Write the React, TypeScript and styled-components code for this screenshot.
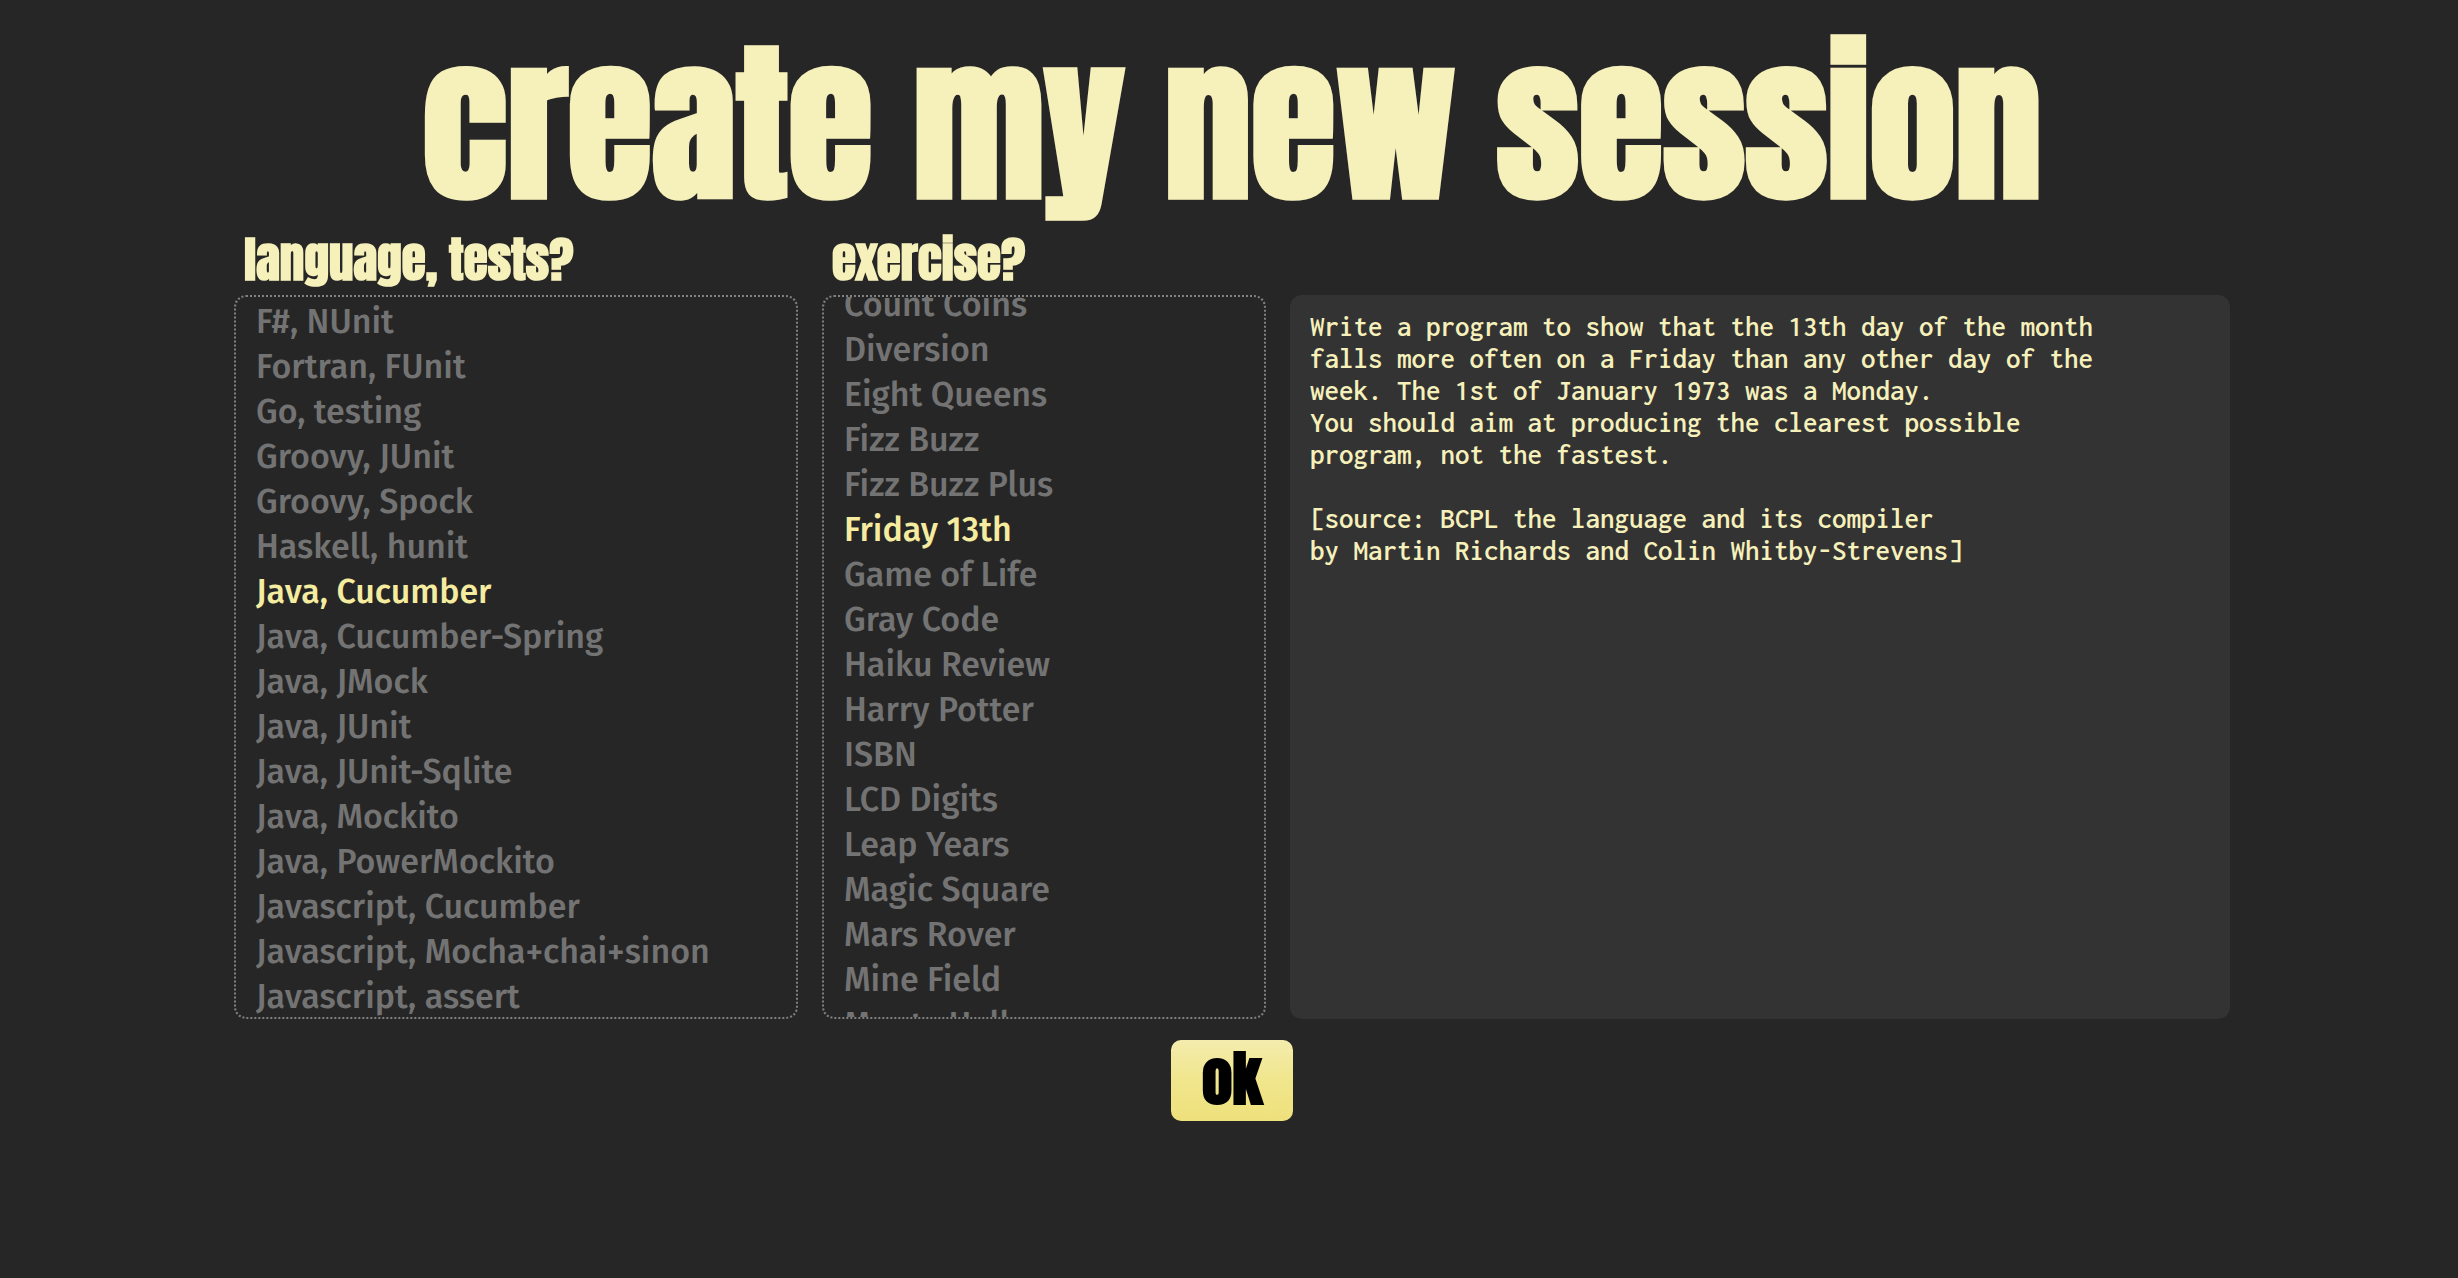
import React, { useLayoutEffect, useRef, useState } from 'react';
import styled, { createGlobalStyle } from 'styled-components';

const display = "Impact, Anton, 'Roboto Condensed', sans-serif";
const body = "'Trebuchet MS', 'Fira Sans', 'Open Sans', sans-serif";
const mono = "Consolas, Inconsolata, 'Noto Sans Mono', 'DejaVu Sans Mono', monospace";

const cream = '#f6f0bb';

const GlobalStyle = createGlobalStyle`
  *, *::before, *::after { box-sizing: border-box; }
  body { margin: 0; background: #262626; }
`;

const Page = styled.main`
  padding: 28px 228px 32px 234px;
  font-family: ${body};
  color: ${cream};
`;

const Title = styled.h1`
  margin: 0 0 4px;
  font: 700 173px/192px ${display};
  text-align: center;
  white-space: nowrap;
`;

const Form = styled.form`
  display: grid;
  grid-template-columns: 564fr 444fr 940fr;
  gap: 21px 24px;
`;

const Group = styled.fieldset`
  display: flex;
  flex-direction: column;
  min-width: 0;
  margin: 0;
  padding: 0;
  border: 0;
`;

const Heading = styled.legend`
  padding: 0 10px;
  font: 700 49px/71px ${display};
`;

const List = styled.div<{ $top: number }>`
  height: 724px;
  padding-top: ${(p) => p.$top}px;
  border: 2px dotted #808080;
  border-radius: 12px;
  overflow-y: auto;
  scrollbar-width: none;
`;

const Choice = styled.label`
  display: block;
  padding: 0 20px;
  font-size: 34px;
  font-weight: 500;
  line-height: 45px;
  white-space: nowrap;
  color: #737373;
  cursor: pointer;

  &:has(input:checked) { color: #f5eca0; }
  &:has(input:focus-visible) { text-decoration: underline; }
`;

const Radio = styled.input`
  appearance: none;
  width: 0;
  height: 0;
  margin: 0;
  outline: 0;
`;

const Instructions = styled.pre`
  align-self: end;
  height: 724px;
  margin: 0;
  padding: 16px 20px;
  border-radius: 12px;
  background: #333333;
  font: 600 29px/32px ${mono};
  white-space: pre-wrap;
  overflow: auto;
`;

const Actions = styled.div`
  grid-column: 1 / -1;
  display: flex;
  justify-content: center;
`;

const OkButton = styled.button`
  padding: 0 31px 5px;
  border: 0;
  border-radius: 10px;
  background: linear-gradient(#f4ecae, #f0e68c 50%, #eee07c);
  color: #000000;
  font: 700 61px/76px ${display};
  cursor: pointer;
`;

const languages = [
  'F#, NUnit',
  'Fortran, FUnit',
  'Go, testing',
  'Groovy, JUnit',
  'Groovy, Spock',
  'Haskell, hunit',
  'Java, Cucumber',
  'Java, Cucumber-Spring',
  'Java, JMock',
  'Java, JUnit',
  'Java, JUnit-Sqlite',
  'Java, Mockito',
  'Java, PowerMockito',
  'Javascript, Cucumber',
  'Javascript, Mocha+chai+sinon',
  'Javascript, assert',
];

const exercises = [
  'Count Coins',
  'Diversion',
  'Eight Queens',
  'Fizz Buzz',
  'Fizz Buzz Plus',
  'Friday 13th',
  'Game of Life',
  'Gray Code',
  'Haiku Review',
  'Harry Potter',
  'ISBN',
  'LCD Digits',
  'Leap Years',
  'Magic Square',
  'Mars Rover',
  'Mine Field',
  'Monty Hall',
];

const instructions = `Write a program to show that the 13th day of the month
falls more often on a Friday than any other day of the
week. The 1st of January 1973 was a Monday.
You should aim at producing the clearest possible
program, not the fastest.

[source: BCPL the language and its compiler
by Martin Richards and Colin Whitby-Strevens]`;

interface PickerProps {
  title: string;
  name: string;
  options: string[];
  initial: string;
  top?: number;
  scroll?: number;
}

function Picker({ title, name, options, initial, top = 0, scroll = 0 }: PickerProps) {
  const [value, setValue] = useState(initial);
  const list = useRef<HTMLDivElement>(null);

  useLayoutEffect(() => {
    if (list.current) list.current.scrollTop = scroll;
  }, [scroll]);

  return (
    <Group>
      <Heading>{title}</Heading>
      <List ref={list} $top={top}>
        {options.map((option) => (
          <Choice key={option}>
            <Radio
              type="radio"
              name={name}
              value={option}
              checked={option === value}
              onChange={() => setValue(option)}
            />
            {option}
          </Choice>
        ))}
      </List>
    </Group>
  );
}

export default function App() {
  return (
    <>
      <GlobalStyle />
      <Page>
        <Title>create my new session</Title>
        <Form onSubmit={(event) => event.preventDefault()}>
          <Picker title="language, tests?" name="language" options={languages} initial="Java, Cucumber" top={2} />
          <Picker title="exercise?" name="exercise" options={exercises} initial="Friday 13th" scroll={15} />
          <Instructions>{instructions}</Instructions>
          <Actions>
            <OkButton type="submit">ok</OkButton>
          </Actions>
        </Form>
      </Page>
    </>
  );
}
